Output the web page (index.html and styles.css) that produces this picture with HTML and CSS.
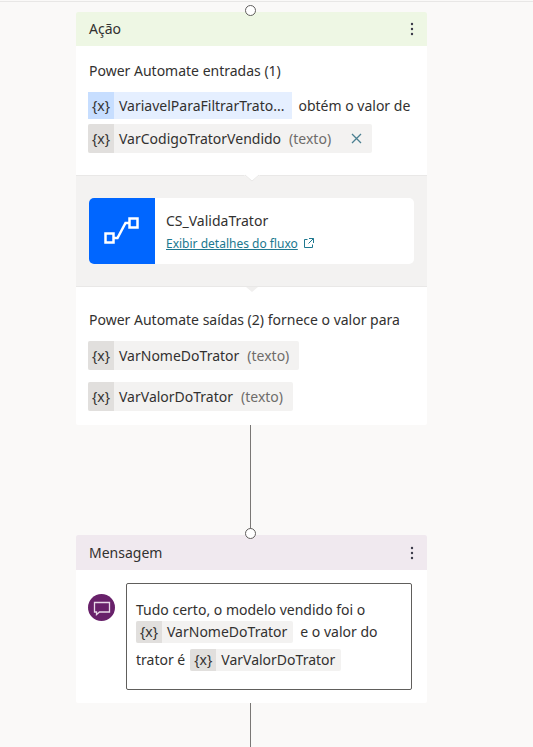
FILE: index.html
```html
<!DOCTYPE html>
<html lang="pt-BR">
<head>
<meta charset="utf-8">
<meta name="viewport" content="width=device-width, initial-scale=1">
<title>Power Automate</title>
<link rel="stylesheet" href="styles.css">
</head>
<body>
<main class="canvas">
  <section class="card">
    <span class="node"></span>
    <header class="head head-action">
      <h2>Ação</h2>
      <button class="more" type="button" aria-label="Mais"><svg width="4" height="14" viewBox="0 0 4 14"><circle cx="2" cy="2" r="1.2"/><circle cx="2" cy="7" r="1.2"/><circle cx="2" cy="12" r="1.2"/></svg></button>
    </header>
    <div class="inputs">
      <p class="label">Power Automate entradas (1)</p>
      <div class="assign">
        <span class="chip chip-blue"><span class="fx">{x}</span><span class="name">VariavelParaFiltrarTrato...</span></span>
        <span>obtém o valor de</span>
      </div>
      <span class="chip"><span class="fx">{x}</span><span class="name">VarCodigoTratorVendido</span><span class="type">(texto)</span>
        <button class="clear" type="button" aria-label="Remover"><svg width="11" height="11" viewBox="0 0 11 11"><path d="M1 1l9 9M10 1l-9 9"/></svg></button></span>
    </div>
    <div class="flow-band">
      <svg class="notch" width="18" height="9" viewBox="0 0 18 9"><path class="notch-fill" d="M0 0h18l-1 1-8 6-8-6z"/><path class="notch-line" d="M2 1l7 6 7-6"/></svg>
      <div class="flow">
        <div class="flow-icon"><svg width="38" height="30" viewBox="0 0 38 30"><path d="M2.500 17.500h8v9h-8zM26.500 2.500h8v9h-8zM10.500 22h4l8-15h4"/></svg></div>
        <div class="flow-text">
          <span>CS_ValidaTrator</span>
          <a href="#fluxo"><span class="link-text">Exibir detalhes do fluxo</span><svg width="11" height="11" viewBox="0 0 11 11"><path d="M4.500 1.500h-3v8h8v-3M6 .500h4.500v4.500M10.500.500l-5 5"/></svg></a>
        </div>
      </div>
    </div>
    <div class="outputs">
      <svg class="notch" width="18" height="9" viewBox="0 0 18 9"><path class="notch-band" d="M3 0h12l-6 5z"/></svg>
      <p class="label">Power Automate saídas (2) fornece o valor para</p>
      <span class="chip"><span class="fx">{x}</span><span class="name">VarNomeDoTrator</span><span class="type">(texto)</span></span>
      <span class="chip"><span class="fx">{x}</span><span class="name">VarValorDoTrator</span><span class="type">(texto)</span></span>
    </div>
  </section>
  <div class="wire"></div>
  <section class="card">
    <span class="node"></span>
    <header class="head head-message">
      <h2>Mensagem</h2>
      <button class="more" type="button" aria-label="Mais"><svg width="4" height="14" viewBox="0 0 4 14"><circle cx="2" cy="2" r="1.2"/><circle cx="2" cy="7" r="1.2"/><circle cx="2" cy="12" r="1.2"/></svg></button>
    </header>
    <div class="message">
      <svg class="bubble" width="27" height="27" viewBox="0 0 27 27"><circle cx="13.500" cy="13.500" r="13.500"/><path d="M6.500 8.500h15v9.500h-10l-3 2.500v-2.500h-2z"/></svg>
      <div class="editor" role="textbox" aria-label="Mensagem" aria-multiline="true" tabindex="0">
        <div class="line">Tudo certo, o modelo vendido foi o</div>
        <div class="line"><span class="chip chip-small"><span class="fx">{x}</span><span class="name">VarNomeDoTrator</span></span><span>e o valor do</span></div>
        <div class="line line-spaced"><span>trator é</span><span class="chip chip-small"><span class="fx">{x}</span><span class="name">VarValorDoTrator</span></span></div>
      </div>
    </div>
  </section>
  <div class="wire wire-end"></div>
</main>
</body>
</html>
```
FILE: styles.css
```css
* { box-sizing: border-box; }
body {
  margin: 0;
  background: #faf9f8;
  color: #323130;
  font-family: "Segoe UI", "Noto Sans", "Open Sans", sans-serif;
  font-size: 14px;
  line-height: 20px;
}
h2, p { margin: 0; font-size: inherit; font-weight: 400; }
button { padding: 0; border: 0; background: none; }
svg { display: block; flex: none; }
.canvas {
  display: flex;
  flex-direction: column;
  height: 100vh;
  margin-top: 1px;
  padding: 10px 106px 0 76px;
  border-top: 1px solid #e8e7e6;
  overflow: hidden;
}
.card {
  position: relative;
  flex: none;
  background: #fff;
  border-radius: 2px;
}
.node {
  position: absolute;
  top: -7px;
  left: 50%;
  width: 11px;
  height: 11px;
  margin-left: -7px;
  border: 1px solid #605e5c;
  border-radius: 50%;
  background: #fff;
}
.head {
  display: flex;
  align-items: center;
  justify-content: space-between;
  height: 35px;
  padding: 0 13px;
  border-radius: 2px 2px 0 0;
}
.head-action { height: 34px; background: #eef7e4; }
.head-message { background: #f0e9ef; }
.more { fill: #3b3a48; }
.inputs, .outputs {
  display: flex;
  flex-direction: column;
  align-items: flex-start;
  padding: 15px 13px 14px 12px;
}
.inputs { gap: 5px; padding-bottom: 22px; }
.inputs .label { margin-bottom: 6px; }
.label { padding-left: 1px; }
.outputs {
  position: relative;
  gap: 12px;
  padding-top: 23px;
}
.outputs .label { margin-bottom: -1px; }
.assign { display: flex; align-items: center; gap: 6px; white-space: nowrap; }
.chip {
  display: inline-flex;
  align-items: center;
  height: 29px;
  padding-right: 10px;
  border-radius: 2px;
  background: #f3f2f1;
  white-space: nowrap;
}
.fx {
  display: flex;
  align-items: center;
  justify-content: center;
  align-self: stretch;
  width: 26px;
  margin-right: 5px;
  border-radius: 2px 0 0 2px;
  background: #e1dfdd;
}
.chip-blue { height: 27px; padding-right: 8px; border-radius: 0; background: #e5efff; }
.chip-blue .fx { background: #c7deff; border-radius: 0; }
.type { margin-left: 8px; color: #6e6c6a; }
.clear { margin-left: 20px; }
.clear svg { fill: none; stroke: #4a7f91; stroke-width: 1.3; }
.flow-band {
  position: relative;
  padding: 22px 13px;
  border: solid #e9e8e7;
  border-width: 1px 0;
  background: #f3f2f1;
}
.notch { position: absolute; top: -2px; left: 50%; margin-left: -9px; }
.outputs .notch { top: 0; }
.notch-fill { fill: #fff; }
.notch-line { fill: none; stroke: #e9e8e7; }
.notch-band { fill: #f0efee; }
.flow {
  display: flex;
  height: 66px;
  border-radius: 5px;
  background: #fff;
  overflow: hidden;
}
.flow-icon {
  display: flex;
  align-items: center;
  justify-content: center;
  width: 66px;
  background: #06f;
}
.flow-icon svg { fill: none; stroke: #fff; stroke-width: 2.5; }
.flow-text {
  display: flex;
  flex-direction: column;
  justify-content: center;
  gap: 3px;
  padding: 2px 0 0 11px;
}
.flow-text a {
  display: flex;
  align-items: center;
  gap: 5px;
  color: #20788f;
  font-size: 12px;
  text-decoration: none;
}
.link-text { text-decoration: underline; }
.flow-text svg { fill: none; stroke: #20788f; }
.wire {
  flex: none;
  align-self: center;
  width: 1px;
  height: 110px;
  margin-right: 2px;
  background: #797775;
}
.wire-end { flex: 1; height: auto; }
.message {
  display: flex;
  align-items: flex-start;
  gap: 11px;
  padding: 13px 15px 13px 12px;
}
.bubble { margin-top: 11px; fill: #68216a; }
.bubble path { fill: none; stroke: #e8d8e8; stroke-width: 1.3; }
.editor {
  flex: 1;
  height: 107px;
  padding: 15px 9px;
  border: 1px solid #605e5c;
  border-radius: 2px;
}
.line { display: flex; align-items: center; gap: 7px; height: 22px; white-space: nowrap; }
.line-spaced { gap: 5px; margin-top: 6px; }
.chip-small { height: 22px; padding-right: 6px; }
```
